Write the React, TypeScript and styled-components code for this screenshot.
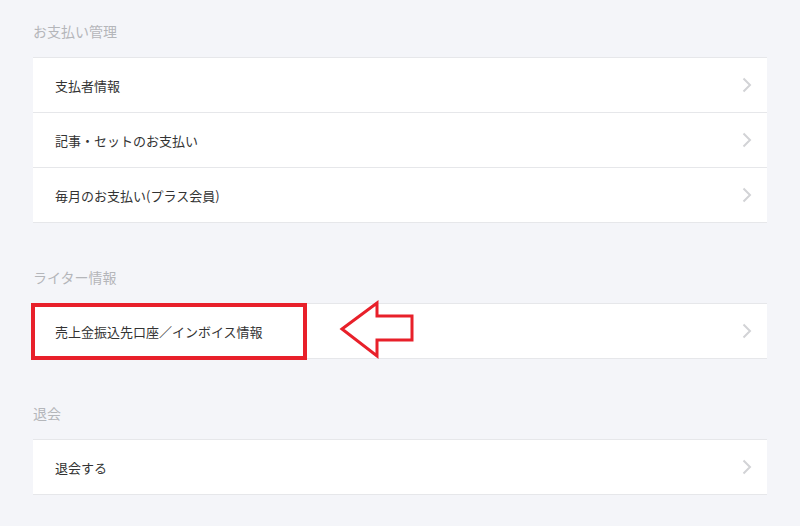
import styled, { createGlobalStyle } from 'styled-components';

const GlobalStyle = createGlobalStyle`
  html, body {
    margin: 0;
    padding: 0;
    background: #f4f5f9;
  }
  body {
    font-family: 'Noto Sans CJK JP', 'Noto Sans', sans-serif;
    -webkit-font-smoothing: antialiased;
  }
`;

const Page = styled.div`
  padding: 21px 33px 30px;
  display: flex;
  flex-direction: column;
  gap: 44px;
`;

const Section = styled.section`
  display: flex;
  flex-direction: column;
`;

const SectionTitle = styled.h2`
  margin: 0 0 16px;
  font-size: 14px;
  line-height: 20px;
  font-weight: 400;
  color: #b4b6ba;
`;

const Card = styled.ul`
  list-style: none;
  margin: 0;
  padding: 0;
  background: #fff;
  border-top: 1px solid #e6e7ea;
`;

const Row = styled.li`
  position: relative;
  height: 54px;
  border-bottom: 1px solid #e6e7ea;
  display: flex;
  align-items: center;
  justify-content: space-between;
  padding: 0 15px 0 22px;
  cursor: pointer;
`;

const Label = styled.span`
  font-size: 13px;
  color: #333;
`;

const Chevron = styled.svg`
  width: 10px;
  height: 16px;
  flex-shrink: 0;
`;

const Highlight = styled.div`
  position: absolute;
  left: -2px;
  top: -1px;
  width: 276px;
  height: 57px;
  box-sizing: border-box;
  border: 4px solid #e8202a;
  pointer-events: none;
`;

const Pointer = styled.svg`
  position: absolute;
  left: 305px;
  top: -4px;
  width: 80px;
  height: 60px;
  pointer-events: none;
`;

type Item = { name: string; marked?: boolean };

const sections: { title: string; items: Item[] }[] = [
  {
    title: 'お支払い管理',
    items: [{ name: '支払者情報' }, { name: '記事・セットのお支払い' }, { name: '毎月のお支払い(プラス会員)' }],
  },
  {
    title: 'ライター情報',
    items: [{ name: '売上金振込先口座／インボイス情報', marked: true }],
  },
  {
    title: '退会',
    items: [{ name: '退会する' }],
  },
];

const App = () => {
  return (
    <>
      <GlobalStyle />
      <Page>
        {sections.map((s) => (
          <Section key={s.title}>
            <SectionTitle>{s.title}</SectionTitle>
            <Card>
              {s.items.map((i) => (
                <Row key={i.name}>
                  <Label>{i.name}</Label>
                  <Chevron viewBox='0 0 10 16'>
                    <path d='M1.5 1.5 L8 8 L1.5 14.5' fill='none' stroke='#d2d3d6' strokeWidth='2' />
                  </Chevron>
                  {i.marked && (
                    <>
                      <Highlight />
                      <Pointer viewBox='0 0 80 60'>
                        <polygon
                          points='4,29 39,3 39,16 74,16 74,40 39,40 39,56'
                          fill='#fff'
                          stroke='#e8202a'
                          strokeWidth='3'
                        />
                      </Pointer>
                    </>
                  )}
                </Row>
              ))}
            </Card>
          </Section>
        ))}
      </Page>
    </>
  );
};

export default App;
